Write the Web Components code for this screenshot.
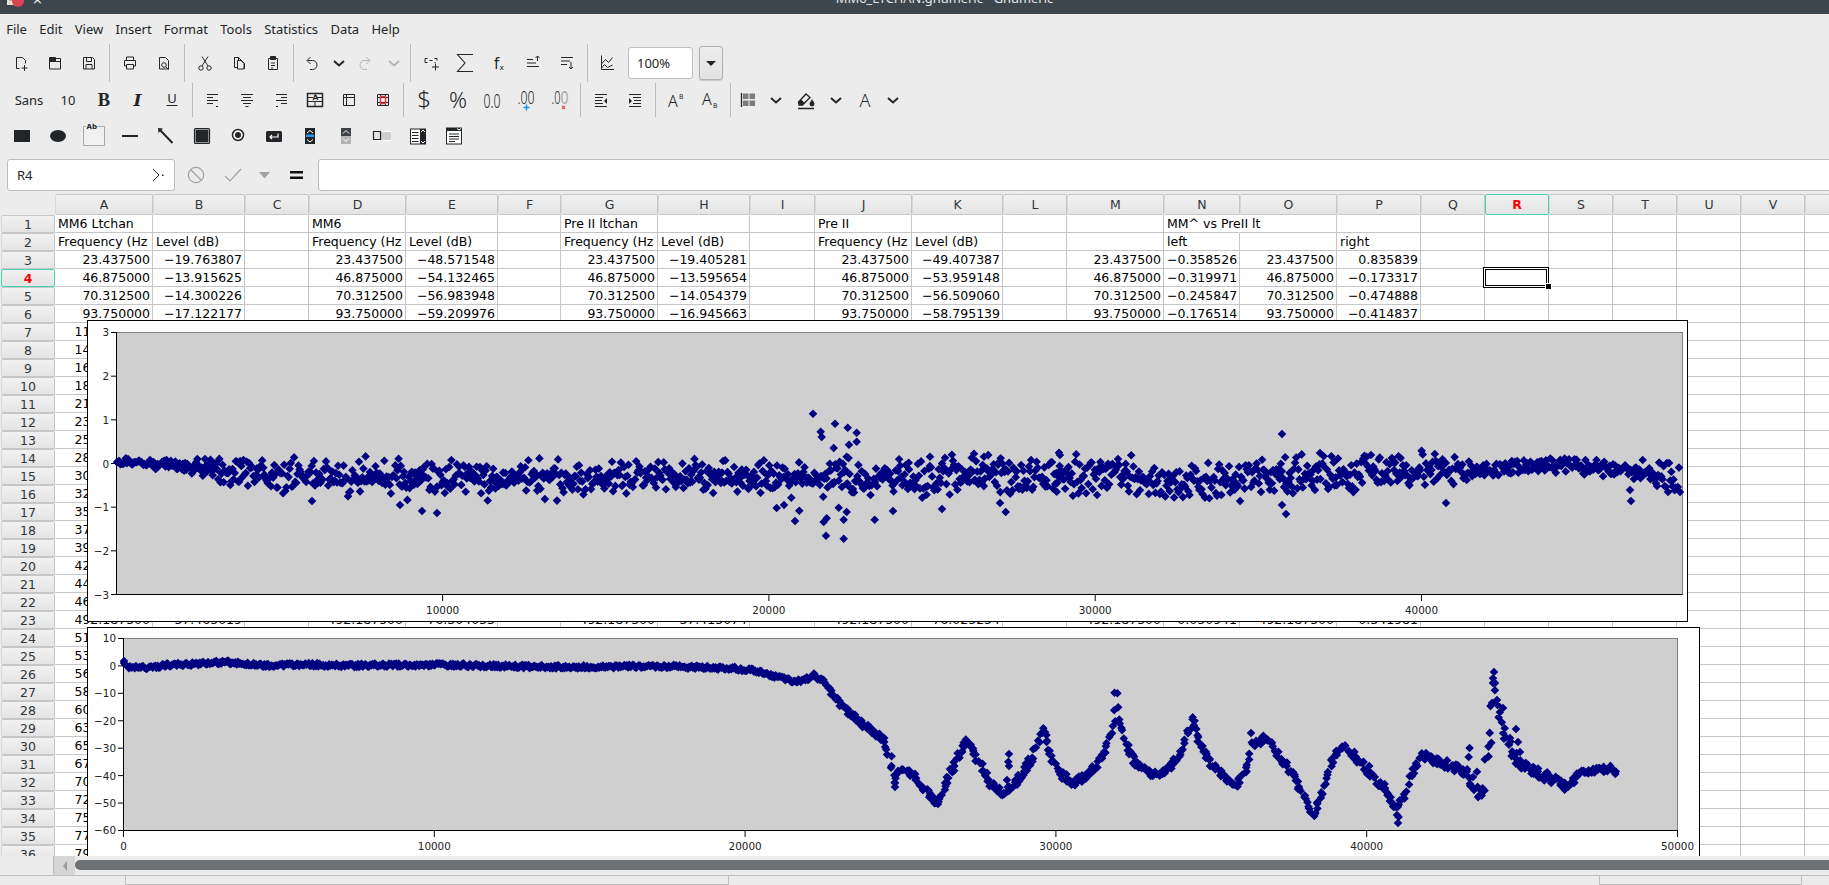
<!DOCTYPE html>
<html>
<head>
<meta charset="utf-8">
<title>MM6_LTCHAN.gnumeric - Gnumeric</title>
<style>
html,body{margin:0;height:885px;overflow:hidden;background:#ececec;color:#232629;font-family:"Noto Sans",sans-serif;font-size:13px}
#app{display:flex;flex-direction:column;height:885px;width:1829px;overflow:hidden}
</style>
</head>
<body>
<div id="app">
  <gn-titlebar>MM6_LTCHAN.gnumeric - Gnumeric</gn-titlebar>
  <gn-menubar>
    <gn-menu>File</gn-menu><gn-menu>Edit</gn-menu><gn-menu>View</gn-menu><gn-menu>Insert</gn-menu><gn-menu>Format</gn-menu><gn-menu>Tools</gn-menu><gn-menu>Statistics</gn-menu><gn-menu>Data</gn-menu><gn-menu>Help</gn-menu>
  </gn-menubar>
  <gn-toolbar h="38">
    <gn-btn i="new"></gn-btn><gn-btn i="open"></gn-btn><gn-btn i="save"></gn-btn><gn-sep></gn-sep>
    <gn-btn i="print"></gn-btn><gn-btn i="preview"></gn-btn><gn-sep></gn-sep>
    <gn-btn i="cut"></gn-btn><gn-btn i="copy"></gn-btn><gn-btn i="paste"></gn-btn><gn-sep></gn-sep>
    <gn-btn i="undo" w="28"></gn-btn><gn-btn i="chev" w="27"></gn-btn><gn-btn i="redo" w="28"></gn-btn><gn-btn i="chevoff" w="27"></gn-btn><gn-sep></gn-sep>
    <gn-btn i="name"></gn-btn><gn-btn i="sum"></gn-btn><gn-btn i="fx"></gn-btn><gn-btn i="sortup"></gn-btn><gn-btn i="sortdown"></gn-btn><gn-sep></gn-sep>
    <gn-btn i="chart"></gn-btn>
    <gn-zoom>100%</gn-zoom>
  </gn-toolbar>
  <gn-toolbar h="36" inset="1">
    <gn-label w="50">Sans</gn-label><gn-label w="33" pad="5">10</gn-label>
    <gn-btn i="bold"></gn-btn><gn-btn i="italic"></gn-btn><gn-btn i="under"></gn-btn><gn-sep></gn-sep>
    <gn-btn i="alignl"></gn-btn><gn-btn i="alignc"></gn-btn><gn-btn i="alignr"></gn-btn><gn-btn i="merge"></gn-btn><gn-btn i="split"></gn-btn><gn-btn i="across"></gn-btn><gn-sep></gn-sep>
    <gn-btn i="money"></gn-btn><gn-btn i="percent"></gn-btn><gn-btn i="thousand"></gn-btn><gn-btn i="incdec"></gn-btn><gn-btn i="decdec"></gn-btn><gn-sep></gn-sep>
    <gn-btn i="indentl"></gn-btn><gn-btn i="indentr"></gn-btn><gn-sep></gn-sep>
    <gn-btn i="sup"></gn-btn><gn-btn i="sub"></gn-btn><gn-sep></gn-sep>
    <gn-btn i="borders" w="28"></gn-btn><gn-btn i="chev" w="28"></gn-btn><gn-btn i="fill" w="31"></gn-btn><gn-btn i="chev" w="30"></gn-btn><gn-btn i="fontcolor" w="28"></gn-btn><gn-btn i="chev" w="27"></gn-btn>
  </gn-toolbar>
  <gn-toolbar h="36">
    <gn-btn i="rect" w="36"></gn-btn><gn-btn i="ellipse" w="36"></gn-btn><gn-btn i="textbox" w="36"></gn-btn><gn-btn i="line" w="36"></gn-btn><gn-btn i="arrow" w="36"></gn-btn><gn-btn i="frame" w="36"></gn-btn><gn-btn i="radio" w="36"></gn-btn><gn-btn i="button" w="36"></gn-btn><gn-btn i="spin" w="36"></gn-btn><gn-btn i="scroll" w="36"></gn-btn><gn-btn i="slider" w="36"></gn-btn><gn-btn i="list" w="36"></gn-btn><gn-btn i="combo" w="36"></gn-btn>
  </gn-toolbar>
  <gn-formulabar cell="R4"></gn-formulabar>
  <gn-sheet>
    <gn-chart kind="a" style="left:87px;top:129px;width:1601px;height:302px"></gn-chart>
    <gn-chart kind="b" style="left:87px;top:436px;width:1613px;height:262px"></gn-chart>
  </gn-sheet>
  <gn-hscroll></gn-hscroll>
  <gn-statusbar></gn-statusbar>
</div>

<script>
// icons are drawn on a 24x24 box, stroke comes from the svg in gn-btn
const DARK = '#232629';
const txt = (x, y, size, s, extra) => `<text x="${x}" y="${y}" font-size="${size}" fill="${DARK}" stroke="none" font-family="'DejaVu Sans',sans-serif" ${extra || ''}>${s}</text>`;
const thin = (x, y, size, s, extra) => `<text x="${x}" y="${y}" font-size="${size}" fill="${DARK}" stroke="none" font-family="'Noto Sans',sans-serif" font-weight="300" ${extra || ''}>${s}</text>`;
const ICONS = {
  new: '<path d="M7.500 6.500h6l3 3v3M7.500 6.500v11h3"/><path d="M15.500 14v6M12.500 17h6"/>',
  open: '<path d="M6.500 7.500h11v10.500h-11z"/><path d="M6.500 10.500h11"/><path d="M6.500 6.500h6v3.500h-6z" fill="#232629"/>',
  save: '<path d="M6.500 6.500h9l2 2v9.500h-11z"/><path d="M9.500 6.500v4h5v-4M9 18v-4.500h6v4.500"/>',
  print: '<path d="M8.500 9.500v-3.500h7v3.500M6.500 9.500h11v5.500h-11z"/><path d="M8.500 13.500h7v4.500h-7z" fill="#ececec"/>',
  preview: '<path d="M7.500 6.500h6l3 3v8.500h-9z"/><circle cx="12" cy="14" r="2.300"/><path d="M13.700 15.700l2.800 2.800"/>',
  cut: '<circle cx="8" cy="17" r="2.200"/><circle cx="16" cy="17" r="2.200"/><path d="M9 15L15 5.500M15 15L9 5.500"/>',
  copy: '<path d="M7.500 6.500h4v10h-4z"/><path d="M10.500 9.500h3.500l3 3v5.500h-6.500z" fill="#ececec"/><path d="M7.500 6.500h4l6 6v5.500"/>',
  paste: '<path d="M7.500 7.500h9v11h-9z"/><path d="M9.500 5.500h5v3h-5z" fill="#232629"/><path d="M10 12h4M10 14.500h4M10 17h2"/>',
  undo: '<path d="M8.500 9.500h5a4.500 4.500 0 0 1 0 9H11M11.500 6L8 9.500 11.500 13"/>',
  redo: '<path stroke="#b4b4b4" d="M15.500 9.500h-5a4.500 4.500 0 0 0 0 9H13M12.500 6l3.500 3.500L12.500 13"/>',
  chev: '<path stroke-width="2" d="M7 10l5 4.500 5-4.500"/>',
  chevoff: '<path stroke-width="2" stroke="#b4b4b4" d="M7 10l5 4.500 5-4.500"/>',
  name: '<path d="M6 7.500h2.500M6 7.500v4h2.500M15.500 7.500h2.500v2M15.500 11.500h1M10.500 9.500h3"/><path d="M16.500 12.500v7M13 16h7"/>',
  sum: '<path stroke-width="1.100" d="M20 3.500H4.500l7.500 8.500-7.500 8.500H20"/>',
  fx: txt(7, 18, 15, 'f') + txt(12.500, 18.500, 7.500, 'x'),
  sortup: '<path d="M6 8.500h6M6 12h9M6 15.500h12"/><path d="M16.500 10V5M14.500 7l2-2 2 2"/>',
  sortdown: '<path d="M6 6.500h12M6 10h9M6 13.500h6"/><path d="M16 11v7M14 16l2 2 2-2"/>',
  chart: '<path d="M5.500 4.500v14H18M5.500 13l4-4.500 3 3 4-5M5.500 17l3-3.500 3 3 5-2.500"/>',
  bold: `<text x="12" y="18" text-anchor="middle" stroke="none" fill="${DARK}" font-size="18.500" font-weight="700" font-family="'Liberation Serif',serif">B</text>`,
  italic: `<text x="11.500" y="18" text-anchor="middle" stroke="none" fill="${DARK}" font-size="17" font-weight="700" font-style="italic" font-family="'DejaVu Serif',serif">I</text>`,
  under: `<text x="12" y="15" text-anchor="middle" stroke="none" fill="${DARK}" font-size="13" font-family="'Noto Sans',sans-serif">U</text><path d="M6.500 17.500h11"/>`,
  alignl: '<path d="M6 6.500h11M6 9.500h6M6 12.500h11M6 15.500h6M15 18.500h2"/>',
  alignc: '<path d="M6 6.500h12M8 9.500h8M6 12.500h12M8 15.500h8M10.500 18.500h3"/>',
  alignr: '<path d="M7 6.500h11M12 9.500h6M7 12.500h11M12 15.500h6M7 18.500h2"/>',
  merge: '<path stroke-width="1.500" d="M4.500 5.500h15v13h-15z"/><path d="M4.500 13.500h15M12 13.500v5M5 9.500h5M14 9.500h5"/>' + txt(9.500, 12, 7.500, 'A', 'font-weight="700"'),
  split: '<path d="M6.500 6.500h11v11h-11zM6.500 9.500h11M9.500 6.500v11"/>',
  across: '<path d="M6.500 6.500h11v11h-11zM6.500 9.500h11M6.500 14.500h11M9.500 6.500v11M14.500 6.500v11"/><path stroke="#e8363a" stroke-width="1.500" d="M9.500 8.500h5v7h-5z"/>',
  money: thin(12, 20, 24, '$', 'text-anchor="middle"'),
  percent: thin(12, 19.500, 21, '%', 'text-anchor="middle" textLength="18" lengthAdjust="spacingAndGlyphs"'),
  thousand: thin(12, 19.500, 20, '0.0', 'text-anchor="middle" textLength="17" lengthAdjust="spacingAndGlyphs"'),
  incdec: thin(12, 15.500, 18, '.00', 'text-anchor="middle" textLength="17" lengthAdjust="spacingAndGlyphs"') + '<path stroke="#2196f3" stroke-width="1.500" d="M12.500 16.500v6M9.500 19.500h6"/>',
  decdec: thin(12.500, 15.500, 18, '.0', 'text-anchor="end" textLength="9" lengthAdjust="spacingAndGlyphs"') + `<text x="12.500" y="15.500" font-size="18" fill="#aaa" stroke="none" font-family="'Noto Sans',sans-serif" textLength="8" lengthAdjust="spacingAndGlyphs">0</text><path stroke="#e05a5a" stroke-width="1.500" d="M14 18l3 3M17 18l-3 3"/>`,
  indentl: '<path d="M6 6.500h12M6 9.500h8M6 12.500h7M6 15.500h8M6 18.500h12"/><path fill="#232629" stroke="none" d="M18 10v6l-3-3z"/>',
  indentr: '<path d="M6 6.500h12M10 9.500h8M11 12.500h7M10 15.500h8M6 18.500h12"/><path fill="#232629" stroke="none" d="M6 10v6l3-3z"/>',
  sup: thin(4, 19, 16, 'A') + txt(15, 11, 6.500, 'B'),
  sub: thin(4, 17, 16, 'A') + txt(15, 20, 6.500, 'B'),
  borders: '<path stroke-width="1.300" d="M5.500 5v14"/><path stroke="none" fill="#7c7c7c" d="M7 5.500h5.500V11H7zM13.500 5.500H19V11h-5.500zM7 12.500h5.500V18H7zM13.500 12.500H19V18h-5.500z"/>',
  fill: '<path stroke-width="1.300" d="M4.500 14l7.500-8 4 3.500-7.500 7.500H5z"/><path fill="#232629" stroke="none" d="M4.500 14l2.500-2.500 4 3.500-2.500 2H5zM18 11c1 2 2.500 3.500 2.500 5a2.500 2.500 0 0 1-5 0c0-1.500 1.500-3 2.500-5z"/><path stroke-width="1.500" d="M4 20.500h16"/>',
  fontcolor: thin(12, 19, 18, 'A', 'text-anchor="middle"'),
  rect: '<path stroke="none" fill="#232629" d="M4 6h16v12H4z"/>',
  ellipse: '<ellipse cx="12" cy="12" rx="8" ry="6" fill="#232629" stroke="none"/>',
  textbox: '<path stroke="#a8a8a8" fill="#f0f0f0" d="M1.500 2.500h21v19h-21z"/><path stroke="none" fill="#ececec" d="M4 0h11v4H4z"/>' + txt(4.500, 4.500, 7, 'Ab', 'font-weight="700"'),
  line: '<path stroke-width="2" d="M4 12h16"/>',
  arrow: '<path stroke-width="2" d="M5.500 5.500L18.500 19"/><path stroke="none" fill="#232629" d="M4 4l5 .5L4.500 9z"/>',
  frame: '<rect x="4.500" y="4.500" width="15" height="15" rx="1" stroke-width="1.200" fill="#fff"/><path stroke="none" fill="#232629" d="M5.500 5.500h13v13h-13z"/>',
  radio: '<circle cx="12" cy="11" r="5.500" fill="#fff" stroke="#232629" stroke-width="1.500"/><circle cx="12" cy="11" r="3" fill="#232629" stroke="none"/>',
  button: '<rect x="4" y="7" width="16" height="11" rx="1.500" fill="#232629" stroke="none"/><path stroke="#fff" stroke-width="1.200" d="M16 9.500v3.500H8M10 11l-2 2 2 2"/>',
  spin: '<path stroke="none" fill="#232629" d="M7 4h10v16H7z"/><path stroke="none" fill="#2196f3" d="M8 10.500h8v2.500H8z"/><path stroke="#fff" d="M9 9l3-2.500L15 9M9 15.500l3 2.500 3-2.500"/>',
  scroll: '<path stroke="none" fill="#3d4247" d="M7 4h10v8H7z"/><path stroke="none" fill="#b4b4b4" d="M7 12h10v8H7z"/><path stroke="#fff" d="M9 9.500l3-3 3 3M9 14.500l3 3 3-3"/>',
  slider: '<path stroke="none" fill="#fff" d="M3 7h18v10H3z"/><path stroke="none" fill="#cfcfcf" d="M10 8h11v8H10z"/><path stroke="#232629" stroke-width="1.200" fill="#e6e6e6" d="M3.500 7.500h7v8h-7z"/>',
  list: '<path stroke="none" fill="#232629" d="M4 4.500h16v16H4z"/><path stroke="none" fill="#fff" d="M5 5.500h9v14H5z"/><path stroke="#232629" d="M6 8.500h6.500M6 11.500h6.500M6 14.500h6.500M6 17.500h6.500"/><path stroke="#fff" d="M15 8l2-2 2 2M15 17l2 2 2-2"/>',
  combo: '<path stroke="none" fill="#232629" d="M4 3.500h16v17H4z"/><path stroke="none" fill="#fff" d="M5 7h14v12.500H5z"/><path stroke="#232629" d="M7 10h10M7 12.500h10M7 15h10M7 17.500h6"/><path stroke="#fff" d="M15 4.500l2 1.500 2-1.500"/>'
};

class GnTitlebar extends HTMLElement {
  constructor() {
    super();
    this.attachShadow({mode: 'open'}).innerHTML = `
      <style>
        :host{display:block;height:14px;background:#3e464d;position:relative;overflow:hidden;flex:none}
        .t{position:absolute;left:0;right:0;top:-10px;text-align:center;color:#e4e6e8;font:12.900px "Noto Sans",sans-serif;line-height:17px;padding-left:60px}
        svg{position:absolute;left:6px;top:-10px}
        .x{position:absolute;left:32px;top:-8px;color:#fff;font:13px "DejaVu Sans",sans-serif}
      </style>
      <svg width="20" height="18"><rect x="1" y="0" width="13" height="15" fill="#e8e2d8"/><path d="M3 4h9M3 7h9M3 10h5" stroke="#8a8a8a"/><circle cx="12" cy="11" r="6" fill="#da4453"/></svg>
      <span class="x">×</span>
      <div class="t"><slot></slot></div>`;
  }
}
customElements.define('gn-titlebar', GnTitlebar);

class GnMenubar extends HTMLElement {
  constructor() {
    super();
    this.attachShadow({mode: 'open'}).innerHTML = `
      <style>:host{display:flex;height:30px;align-items:center;flex:none}</style><slot></slot>`;
  }
}
customElements.define('gn-menubar', GnMenubar);

class GnMenu extends HTMLElement {
  constructor() {
    super();
    this.attachShadow({mode: 'open'}).innerHTML = `
      <style>:host{display:block;padding:0 6.150px;font:13px "Noto Sans",sans-serif;color:#232629}</style><slot></slot>`;
  }
}
customElements.define('gn-menu', GnMenu);

class GnToolbar extends HTMLElement {
  constructor() {
    super();
    const inset = this.getAttribute('inset') || 0;
    this.attachShadow({mode: 'open'}).innerHTML = `
      <style>:host{display:flex;align-items:stretch;flex:none;padding:${inset}px 0 ${inset}px 4px;box-sizing:border-box;height:${this.getAttribute('h')}px}</style><slot></slot>`;
  }
}
customElements.define('gn-toolbar', GnToolbar);

class GnSep extends HTMLElement {
  constructor() {
    super();
    this.attachShadow({mode: 'open'}).innerHTML = `
      <style>:host{display:block;width:1px;margin:0 3px;background:#bcbcbc;flex:none}</style>`;
  }
}
customElements.define('gn-sep', GnSep);

class GnBtn extends HTMLElement {
  constructor() {
    super();
    const w = this.getAttribute('w') || 34;
    this.attachShadow({mode: 'open'}).innerHTML = `
      <style>
        :host{display:flex;align-items:center;justify-content:center;flex:none;width:${w}px}
        svg{overflow:visible;display:block}
      </style>
      <svg width="24" height="24" viewBox="0 0 24 24" fill="none" stroke="${DARK}" stroke-width="1">${ICONS[this.getAttribute('i')] || ''}</svg>`;
  }
}
customElements.define('gn-btn', GnBtn);

class GnLabel extends HTMLElement {
  constructor() {
    super();
    this.attachShadow({mode: 'open'}).innerHTML = `
      <style>:host{display:flex;align-items:center;justify-content:center;flex:none;box-sizing:border-box;width:${this.getAttribute('w')}px;padding-right:${this.getAttribute('pad') || 0}px;font:13px "Noto Sans",sans-serif;color:#232629}</style><slot></slot>`;
  }
}
customElements.define('gn-label', GnLabel);

class GnZoom extends HTMLElement {
  constructor() {
    super();
    this.attachShadow({mode: 'open'}).innerHTML = `
      <style>
        :host{display:flex;align-items:center;gap:6px;margin-left:3px;flex:none}
        .in{box-sizing:border-box;width:65px;height:32px;background:#fff;border:1px solid #bfbfbf;border-radius:3px;padding-left:8px;font:13px/30px "Noto Sans",sans-serif;color:#232629}
        .b{box-sizing:border-box;width:24px;height:34px;border:1px solid #b0b0b0;border-radius:3px;background:linear-gradient(#ededed,#e2e2e2);display:flex;align-items:center;justify-content:center;box-shadow:0 1px 1px #c8c8c8}
        .b i{display:block;border:5px solid transparent;border-top:5px solid #232629;border-bottom:0}
      </style>
      <div class="in"><slot></slot></div><div class="b"><i></i></div>`;
  }
}
customElements.define('gn-zoom', GnZoom);

class GnFormulabar extends HTMLElement {
  constructor() {
    super();
    this.attachShadow({mode: 'open'}).innerHTML = `
      <style>
        :host{display:flex;align-items:flex-start;height:37px;flex:none;box-sizing:border-box;padding:5px 0 0 7px;overflow:hidden}
        .name{box-sizing:border-box;width:168px;height:32px;background:#fff;border:1px solid #bdbdbd;border-radius:3px;display:flex;align-items:center;justify-content:space-between;padding:0 10px 0 9px;font:13px "Noto Sans",sans-serif;color:#232629;flex:none}
        .slot{width:37px;height:32px;display:flex;align-items:center;justify-content:center;flex:none}
        .entry{flex:none;width:1600px;height:32px;box-sizing:border-box;background:#fff;border:1px solid #bdbdbd;border-radius:3px;margin-left:3px}
        svg{display:block}
      </style>
      <div class="name"><span>${this.getAttribute('cell')}</span>
        <svg width="12" height="14" fill="none" stroke="#232629"><path d="M1 1l6 6-6 6"/><path d="M10 6.500h1.500v1.500H10z" fill="#232629" stroke="none"/></svg></div>
      <div class="slot" style="margin-left:2px"><svg width="18" height="18" fill="none" stroke="#a2a2a2" stroke-width="1.200"><circle cx="9" cy="9" r="7.700"/><path d="M3.500 3.500l11 11"/></svg></div>
      <div class="slot"><svg width="18" height="18" fill="none" stroke="#a2a2a2" stroke-width="1.200"><path d="M1 10l5 5L17 3"/></svg></div>
      <div class="slot" style="width:27px"><svg width="11" height="7"><path d="M0 0h11L5.500 6.500z" fill="#a2a2a2"/></svg></div>
      <div class="slot"><svg width="14" height="10"><path d="M0 1h13v2.500H0zM0 6.500h13V9H0z" fill="#111"/></svg></div>
      <div class="entry"></div>`;
  }
}
customElements.define('gn-formulabar', GnFormulabar);

// column widths and the sheet contents
const COLS = [['A',98],['B',92],['C',64],['D',97],['E',92],['F',63],['G',97],['H',92],['I',65],['J',97],['K',91],['L',64],['M',97],['N',76],['O',97],['P',84],['Q',64],['R',64],['S',64],['T',64],['U',64],['V',64],['W',64]];
const FREQ = ['23.437500','46.875000','70.312500','93.750000'];
const cells = {
  'A1':'MM6 Ltchan','D1':'MM6','G1':'Pre II ltchan','J1':'Pre II','N1':'MM^ vs PreII lt',
  'A2':'Frequency (Hz','B2':'Level (dB)','D2':'Frequency (Hz','E2':'Level (dB)','G2':'Frequency (Hz','H2':'Level (dB)','J2':'Frequency (Hz','K2':'Level (dB)','N2':'left','P2':'right'
};
const nums = {
  B:['−19.763807','−13.915625','−14.300226','−17.122177'],
  E:['−48.571548','−54.132465','−56.983948','−59.209976'],
  H:['−19.405281','−13.595654','−14.054379','−16.945663'],
  K:['−49.407387','−53.959148','−56.509060','−58.795139'],
  N:['−0.358526','−0.319971','−0.245847','−0.176514'],
  P:['0.835839','−0.173317','−0.474888','−0.414837']
};
'ADGJMO'.split('').forEach(c => FREQ.forEach((f, i) => cells[c + (i + 3)] = f));
Object.keys(nums).forEach(c => nums[c].forEach((f, i) => cells[c + (i + 3)] = f));
// the rest of the frequency columns run under the two charts
for (let r = 7; r <= 36; r++) cells['A' + r] = (23.4375 * (r - 2)).toFixed(6);
Object.assign(cells, {D23:'492.187500',G23:'492.187500',J23:'492.187500',M23:'492.187500',O23:'492.187500',B23:'−37.465019',E23:'−76.304055',H23:'−37.415074',K23:'−76.025254',N23:'0.050941',P23:'0.341981'});

class GnSheet extends HTMLElement {
  constructor() {
    super();
    let html = '<div class="h corner"></div>';
    COLS.forEach(c => html += `<div class="h${c[0] === 'R' ? ' on' : ''}">${c[0]}</div>`);
    for (let r = 1; r <= 36; r++) {
      html += `<div class="h rowh${r === 4 ? ' on' : ''}">${r}</div>`;
      COLS.forEach(c => {
        const id = c[0] + r, v = cells[id];
        let cls = 'c';
        if (v && r > 2) cls += ' num';
        if (v && v.startsWith('Frequency')) cls += ' clip';
        if (id === 'N1') cls += ' over';
        html += `<div class="${cls}">${v ? `<span>${v}</span>` : ''}${id === 'R4' ? '<b class="sel"></b><b class="grip"></b>' : ''}</div>`;
      });
    }
    this.attachShadow({mode: 'open'}).innerHTML = `
      <style>
        :host{display:block;position:relative;flex:none;height:665px;overflow:hidden;box-sizing:border-box;padding-top:3px}
        .grid{display:grid;width:1869px;grid-template-columns:55px ${COLS.map(c => c[1] + 'px').join(' ')};grid-template-rows:21px repeat(36,18px);font:12.500px "DejaVu Sans",sans-serif}
        .h{box-sizing:border-box;display:flex;align-items:center;justify-content:center;background:linear-gradient(#f1f1f1,#e4e4e4);border:1px solid #c6c6c6;border-left-color:#d8d8d8;border-radius:2px;color:#31363b}
        .rowh{margin-left:1px}
        .corner{background:#ececec;border:0}
        .h.on{color:#f00;font-weight:700;border-color:#46d4b6}
        .c{box-sizing:border-box;background:#fff;border-right:1px solid #c6c6c6;border-bottom:1px solid #c6c6c6;line-height:17px;padding:0 3px;white-space:nowrap;color:#000;position:relative}
        .c.num{text-align:right;padding-right:2px}
        .c.clip{overflow:hidden;padding-right:0}
        .c.over{border-right-color:transparent;overflow:visible;z-index:1}
        .c.over span{background:#fff}
        .sel{position:absolute;left:-2px;top:-2px;width:66px;height:21px;box-sizing:border-box;border:1px solid #000;outline:1px solid #fff;outline-offset:-2px;z-index:2}
        .sel::after{content:"";position:absolute;inset:1px;border:1px solid #000}
        .grip{position:absolute;right:-3px;bottom:-3px;width:5px;height:5px;background:#000;border:0;outline:1px solid #fff;z-index:3}
      </style>
      <div class="grid">${html}</div><slot></slot>`;
  }
}
customElements.define('gn-sheet', GnSheet);

// small seeded generator, the scatter must come out the same on every load
function rng(seed) {
  return () => {
    seed = (seed + 0x6D2B79F5) | 0;
    let t = Math.imul(seed ^ (seed >>> 15), 1 | seed);
    t = (t + Math.imul(t ^ (t >>> 7), 61 | t)) ^ t;
    return ((t ^ (t >>> 14)) >>> 0) / 4294967296;
  };
}
function lerp(pts, x) {
  for (let i = 1; i < pts.length; i++) {
    if (x <= pts[i][0]) {
      const a = pts[i - 1], b = pts[i];
      return a[1] + (b[1] - a[1]) * (x - a[0]) / (b[0] - a[0]);
    }
  }
  return pts[pts.length - 1][1];
}
const diamond = (x, y) => `M${x.toFixed(1)} ${(y - 4.3).toFixed(1)}l4.300 4.300-4.300 4.300-4.300-4.300z`;

// scatter of the first chart, all in page pixels
function dataA() {
  const mid = [[116,462],[170,464],[230,470],[300,477],[400,479],[500,480],[600,478],[700,476],[800,478],[900,479],[1000,474],[1040,478],[1100,473],[1180,482],[1240,480],[1300,474],[1400,472],[1500,468],[1560,465],[1620,470],[1650,477],[1682,482]];
  const spread = [[116,1.500],[180,2.500],[240,7],[1000,8],[1300,8],[1440,7],[1480,3.500],[1600,4],[1680,7]];
  const r = rng(71);
  const out = [];
  for (let x = 117; x < 1680; x += 1.1) {
    const g = (r() + r() + r() - 1.5) * 2.200;
    out.push([x, lerp(mid, x) + g * lerp(spread, x)]);
  }
  const z = [[219,71],[285,101],[323,113],[242,125],[350,128],[245,141],[350,155],[327,164],[281,174],[320,200],[797,366],[606,357],[459,363],[404,389],[165,393],[311,389],[260,385],[251,396],[258,437],[311,446],[320,366],[296,353],[110,354],[132,345],[178,362],[702,191],[732,200],[782,205],[957,188],[506,218],[570,200],[615,203],[950,305]];
  z.forEach(p => out.push([740 + p[0] / 3, 390 + p[1] / 3]));
  [[1282,434],[1286,514],[1282,505],[1446,503],[1631,501],[312,501],[437,513],[422,511],[400,505],[1000,503],[1285,488],[1060,455],[1320,453],[1630,490],[1680,492]].forEach(p => out.push(p));
  return out;
}

function dataB() {
  const curve = [[123,664],[130,667],[150,668],[165,665],[200,664],[225,662],[240,663.5],[270,665.6],[300,664.5],[350,665.5],[400,665],[450,665],[500,666],[550,667],[600,667],[650,666],[690,667],[730,668.3],[750,670],[770,675],[790,680.7],[805,680],[813,675],[825,681.7],[833,695],[847,710],[863,725],[882,738],[887,746.7],[892,770],[895,786],[898,773],[905,770],[917,778],[927,793],[935,803],[943,791.7],[952,771.7],[960,753],[967,739],[973,750],[980,765],[990,783],[1002,793],[1012,786.7],[1023,773],[1033,756.7],[1042,728],[1045,740],[1052,758],[1060,773],[1073,783],[1088,775],[1105,753],[1113,728],[1117,690],[1120,718],[1127,747],[1137,765],[1155,775],[1170,768],[1183,750],[1192,717],[1200,743],[1212,765],[1234,787],[1248,767],[1252,745],[1266,737],[1280,757],[1300,788],[1314,817],[1324,787],[1334,757],[1346,747],[1368,770],[1388,793],[1397,807],[1405,797],[1409,780],[1421,755],[1441,763],[1465,770],[1473,787],[1479,793],[1485,787],[1485.500,763],[1489,743],[1491,730],[1492,703],[1493,683],[1494,672],[1497,700],[1499,713],[1505,737],[1513,757],[1533,770],[1549,777],[1565,787],[1573,783],[1579,773],[1601,770],[1615,770]];
  const spread = [[123,1.700],[700,1.700],[800,2],[900,3],[1440,3.500],[1450,5],[1480,5.500],[1500,3.500],[1510,5.500],[1560,4.500],[1575,2],[1590,2],[1600,3.500],[1615,4.500]];
  const r = rng(19);
  const out = [];
  for (let x = 124; x < 1616; x += 1.2) {
    // slopes past 20 kHz get sideways scatter as well, a vertical one would not widen them
    const dx = x > 830 ? (r() - 0.5) * 4 : 0;
    out.push([x + dx, lerp(curve, x) + (r() - 0.5) * 2 * lerp(spread, x)]);
  }
  [[124,661],[1009,754],[1008.3,761.7],[1009,766],[1007,780],[895,787],[1398.6,817],[1398,823],[1397,815],[1494,672],[1493,683],[1492,703],[1469.6,748],[1468.7,757],[1477,771.7],[1473,777],[1516,729],[1510,738],[1518,742],[1520,752],[1251,733],[1500,712],[1503,708]].forEach(p => out.push(p));
  return out;
}

const CHARTS = {
  a: {
    box: [87, 320, 1601, 302], plot: [116.500, 332.500, 1682.500, 594.500],
    xt: [10000, 20000, 30000, 40000], xs: h => 116.300 + h * 0.03263, xl: 609.500,
    yt: [3, 2, 1, 0, -1, -2, -3], ys: v => 463.500 - v * 43.670, data: dataA
  },
  b: {
    box: [87, 627, 1613, 262], plot: [123.500, 638.500, 1677.500, 830.500],
    xt: [0, 10000, 20000, 30000, 40000, 50000], xs: h => 123.500 + h * 0.03108, xl: 845.500,
    yt: [10, 0, -10, -20, -30, -40, -50, -60], ys: v => 665.900 - v * 2.743, data: dataB
  }
};

class GnChart extends HTMLElement {
  constructor() {
    super();
    const c = CHARTS[this.getAttribute('kind')];
    const [bx, by, bw, bh] = c.box;
    const [l, t, r, b] = c.plot;
    const lab = v => String(v).replace('-', '−');
    let ticks = '', labels = '';
    c.xt.forEach(h => {
      const x = c.xs(h);
      ticks += `M${x} ${b}v6.500`;
      labels += `<text x="${x}" y="${c.xl + 4}" text-anchor="middle">${h}</text>`;
    });
    c.yt.forEach(v => {
      const y = c.ys(v);
      ticks += `M${l} ${y}h-5.500`;
      labels += `<text x="${l - 7.500}" y="${y + 4}" text-anchor="end">${lab(v)}</text>`;
    });
    const marks = c.data().map(p => diamond(p[0], p[1])).join('');
    this.attachShadow({mode: 'open'}).innerHTML = `
      <style>
        :host{display:block;position:absolute;background:#fff}
        svg{display:block}
        text{font:10.400px "DejaVu Sans",sans-serif;fill:#222}
      </style>
      <svg width="${bw}" height="${bh}" viewBox="${bx} ${by} ${bw} ${bh}">
        <rect x="${bx + .5}" y="${by + .5}" width="${bw - 1}" height="${bh - 1}" fill="#fff" stroke="#000"/>
        <rect x="${l}" y="${t}" width="${r - l}" height="${b - t}" fill="#cfcfcf" stroke="#808080"/>
        <path d="M${l} ${t}V${b}H${r}" fill="none" stroke="#000"/>
        <path d="${ticks}" fill="none" stroke="#000"/>
        <path d="${marks}" fill="#000080"/>
        ${labels}
      </svg>`;
  }
}
customElements.define('gn-chart', GnChart);

class GnHscroll extends HTMLElement {
  constructor() {
    super();
    this.attachShadow({mode: 'open'}).innerHTML = `
      <style>
        :host{display:flex;height:19px;flex:none;background:#ececec;position:relative}
        .l{width:53px;border-right:1px solid #bdbdbd;flex:none}
        .btn{width:21px;background:#d6d6d6;display:flex;align-items:center;justify-content:center;flex:none}
        .btn i{border:5px solid transparent;border-right:4px solid #9a9a9a;border-left:0}
        .th{flex:1;margin:4px -10px 5px 0;background:#6e7174;border-radius:5px 0 0 5px}
      </style>
      <div class="l"></div><div class="btn"><i></i></div><div class="th"></div>`;
  }
}
customElements.define('gn-hscroll', GnHscroll);

class GnStatusbar extends HTMLElement {
  constructor() {
    super();
    this.attachShadow({mode: 'open'}).innerHTML = `
      <style>
        :host{display:flex;height:10px;flex:none;box-sizing:border-box;border-top:1px solid #c0c0c0;padding-left:125px}
        .a{width:604px;border:1px solid #c0c0c0;border-top:0;box-sizing:border-box;flex:none}
        .b{width:203px;margin-left:870px;border:1px solid #c0c0c0;border-top:0;box-sizing:border-box;flex:none}
      </style>
      <div class="a"></div><div class="b"></div>`;
  }
}
customElements.define('gn-statusbar', GnStatusbar);
</script>
</body>
</html>
